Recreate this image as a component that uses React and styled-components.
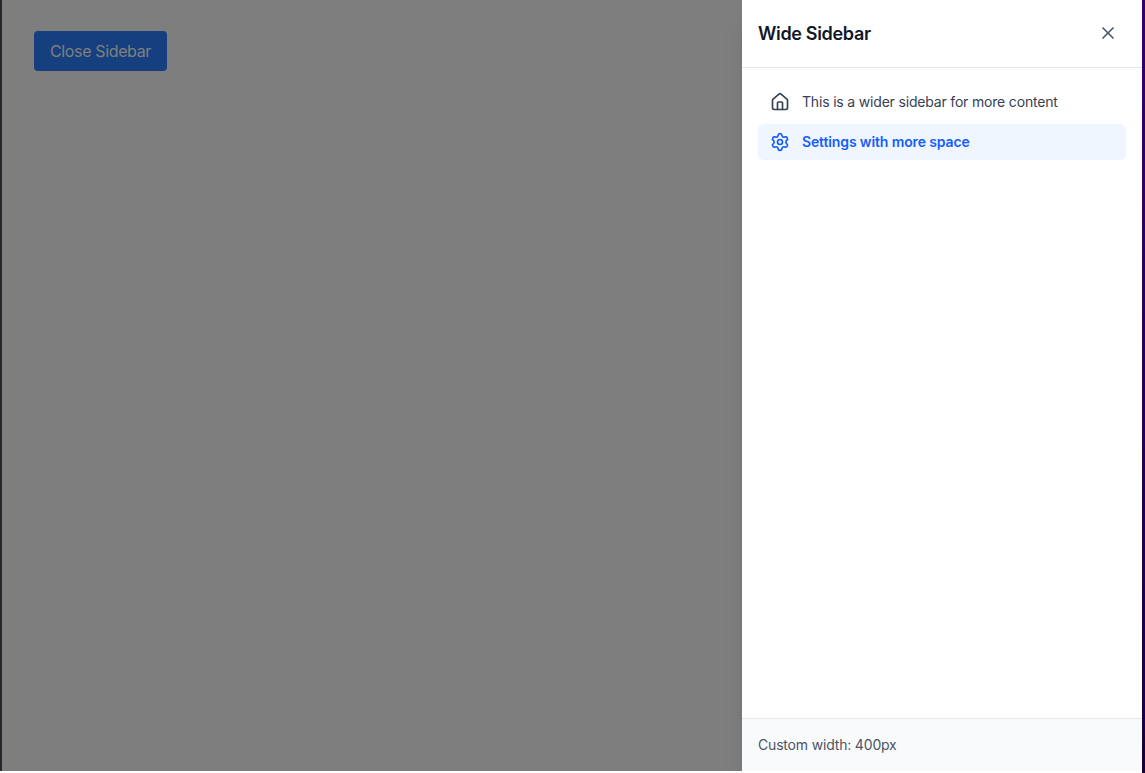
import React, { useState } from 'react';
import styled, { createGlobalStyle } from 'styled-components';
import { House, Settings, X } from 'lucide-react';

const GlobalStyle = createGlobalStyle`
  *, *::before, *::after { box-sizing: border-box; }
  html, body { margin: 0; padding: 0; overflow: hidden; }
  body { font-family: Inter, "Liberation Sans", sans-serif; background: #fff; }
  button { font: inherit; border: 0; cursor: pointer; }
`;

const Frame = styled.div`
  display: flex;
  height: 100vh;
`;

const LeftEdge = styled.div`
  width: 2px;
  margin-bottom: 2px;
  background: #22272e;
`;

const RightEdge = styled.div`
  width: 3px;
  background: linear-gradient(#36006c, #17003f);
`;

const Main = styled.main`
  flex: 1;
  margin-bottom: 2px;
  padding: 31px 32px;
  background: #7e7e7e;
`;

const ToggleButton = styled.button`
  height: 40px;
  width: 133px;
  padding: 0;
  border-radius: 4px;
  background: #153f7f;
  color: #808080;
  font-size: 16px;
  line-height: 24px;
  letter-spacing: -0.36px;
`;

const Sidebar = styled.aside`
  display: flex;
  flex-direction: column;
  width: 400px;
  margin-bottom: 2px;
  background: #fff;
  box-shadow: 0 20px 25px -5px rgba(0, 0, 0, 0.1), 0 8px 10px -6px rgba(0, 0, 0, 0.1);
  clip-path: inset(0 0 0 -30px);
`;

const Header = styled.header`
  display: flex;
  align-items: center;
  justify-content: space-between;
  height: 68px;
  padding: 0 16px 1px;
  border-bottom: 1px solid #e5e7eb;
`;

const Title = styled.h2`
  margin: 0;
  padding-top: 2px;
  color: #101828;
  font-size: 18px;
  line-height: 28px;
  font-weight: 600;
  letter-spacing: -0.33px;
`;

const CloseButton = styled.button`
  display: flex;
  padding: 8px;
  background: transparent;
  color: #4a5565;
`;

const Nav = styled.nav`
  display: flex;
  flex: 1;
  flex-direction: column;
  gap: 4px;
  padding: 16px;
`;

const NavItem = styled.a`
  display: flex;
  align-items: center;
  gap: 12px;
  height: 36px;
  padding: 0 12px;
  border-radius: 6px;
  color: ${({ $active }) => ($active ? '#155dfc' : '#364153')};
  background: ${({ $active }) => ($active ? '#eff6ff' : 'transparent')};
  font-size: 14px;
  line-height: 20px;
  font-weight: ${({ $active }) => ($active ? 600 : 400)};
  letter-spacing: ${({ $active }) => ($active ? '-0.13px' : '-0.18px')};
`;

const Footer = styled.footer`
  height: 53px;
  padding: 16px;
  border-top: 1px solid #e5e7eb;
  background: #f9fafb;
  color: #4a5565;
  font-size: 14px;
  line-height: 20px;
  letter-spacing: -0.18px;
`;

export default function App() {
  const [open, setOpen] = useState(true);
  return (
    <>
      <GlobalStyle />
      <Frame>
        <LeftEdge />
        <Main>
          <ToggleButton onClick={() => setOpen(!open)}>
            {open ? 'Close Sidebar' : 'Open Sidebar'}
          </ToggleButton>
        </Main>
        {open && (
          <Sidebar>
            <Header>
              <Title>Wide Sidebar</Title>
              <CloseButton aria-label="Close" onClick={() => setOpen(false)}>
                <X size={20} />
              </CloseButton>
            </Header>
            <Nav>
              <NavItem>
                <House size={20} />
                This is a wider sidebar for more content
              </NavItem>
              <NavItem $active>
                <Settings size={20} />
                Settings with more space
              </NavItem>
            </Nav>
            <Footer>Custom width: 400px</Footer>
          </Sidebar>
        )}
        <RightEdge />
      </Frame>
    </>
  );
}
